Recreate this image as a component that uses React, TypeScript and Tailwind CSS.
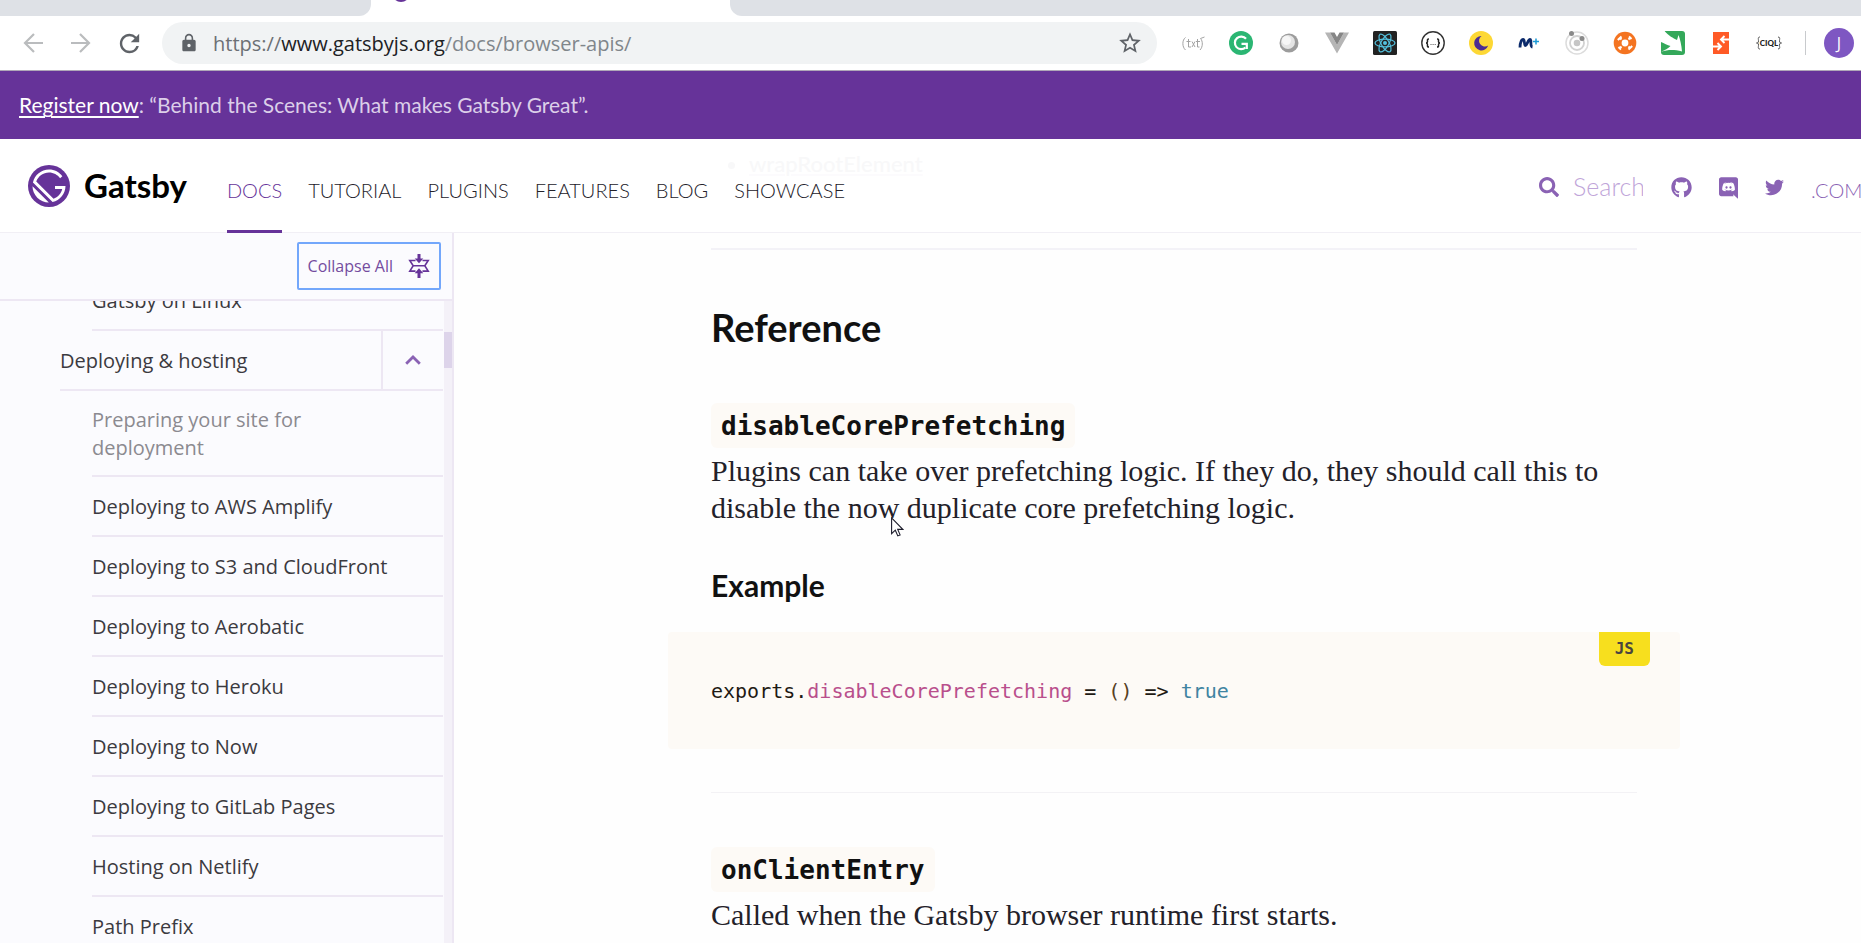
import type { ReactNode } from "react";
import { FaGithub, FaSearch, FaTwitter } from "react-icons/fa";
import { MdLock, MdRefresh, MdStarOutline } from "react-icons/md";

const navItems = ["Tutorial", "Plugins", "Features", "Blog", "Showcase"];

const guides = [
  "Deploying to AWS Amplify",
  "Deploying to S3 and CloudFront",
  "Deploying to Aerobatic",
  "Deploying to Heroku",
  "Deploying to Now",
  "Deploying to GitLab Pages",
  "Hosting on Netlify",
  "Path Prefix",
];

function Arrow({ back = false }: { back?: boolean }) {
  return (
    <svg viewBox="0 0 20 20" className="size-5" fill="none" stroke="#babcbe" strokeWidth="2.2">
      <path d={back ? "M20 10H2M11 1L2 10l9 9" : "M0 10h18M9 1l9 9-9 9"} />
    </svg>
  );
}

function GatsbyLogo() {
  return (
    <svg viewBox="0 0 28 28" className="size-[42px]">
      <circle cx="14" cy="14" r="14" fill="#663399" />
      <path
        fill="#fff"
        d="M6.2 21.8C4.1 19.7 3 16.9 3 14.2L13.9 25c-2.8-.1-5.6-1.1-7.7-3.2zm10.2 2.9L3.3 11.6C4.4 6.7 8.8 3 14 3c3.7 0 6.9 1.8 8.9 4.5l-1.5 1.3C19.7 6.5 17 5 14 5c-3.9 0-7.2 2.5-8.5 6L17 22.5c2.9-1 5.1-3.5 5.8-6.5H18v-2h7c0 5.2-3.7 9.6-8.6 10.7z"
      />
    </svg>
  );
}

function DiscordLogo() {
  return (
    <svg viewBox="0 0 448 512" className="h-[22px] w-[19px]" fill="currentColor">
      <path d="M297.216 243.2c0 15.616-11.52 28.416-26.112 28.416-14.336 0-26.112-12.8-26.112-28.416s11.52-28.416 26.112-28.416c14.592 0 26.112 12.8 26.112 28.416zm-119.552-28.416c-14.592 0-26.112 12.8-26.112 28.416s11.776 28.416 26.112 28.416c14.592 0 26.112-12.8 26.112-28.416.256-15.616-11.52-28.416-26.112-28.416zM448 52.736V512c-64.494-56.994-43.868-38.128-118.784-107.776l13.568 47.36H52.48C23.552 451.584 0 428.032 0 398.848V52.736C0 23.552 23.552 0 52.48 0h343.04C424.448 0 448 23.552 448 52.736zm-72.96 242.688c0-82.432-36.864-149.248-36.864-149.248-36.864-27.648-71.936-26.88-71.936-26.88l-3.584 4.096c43.52 13.312 63.744 32.512 63.744 32.512-60.811-33.329-132.244-33.335-191.232-7.424-9.472 4.352-15.104 7.424-15.104 7.424s21.248-20.224 67.328-33.536l-2.56-3.072s-35.072-.768-71.936 26.88c0 0-36.864 66.816-36.864 149.248 0 0 21.504 37.12 78.08 38.912 0 0 9.472-11.52 17.152-21.248-32.512-9.728-44.8-30.208-44.8-30.208 3.766 2.636 9.976 6.053 10.496 6.4 43.21 24.198 104.588 32.126 159.744 8.96 8.96-3.328 18.944-8.192 29.44-15.104 0 0-12.8 20.992-46.336 30.464 7.68 9.728 16.896 20.736 16.896 20.736 56.576-1.792 78.336-38.912 78.336-38.912z" />
    </svg>
  );
}

function CollapseIcon() {
  return (
    <svg viewBox="0 0 22 24" className="h-6 w-[22px]" fill="none" stroke="#663399" strokeWidth="1.6">
      <path d="M7.5 6.5H1.8l3.4 5.2-3.4 5.4h5.7M14.5 6.5h5.7l-3.4 5.2 3.4 5.4h-5.7M5.2 11.7h11.6" />
      <path
        fill="#663399"
        stroke="none"
        d="M9.5 0h3v4.5h2.8L11 9.3 6.7 4.5h2.8zM9.5 24h3v-4.8h2.8L11 14.3l-4.3 4.9h2.8z"
      />
    </svg>
  );
}

function Extension({ label, children }: { label: string; children: ReactNode }) {
  return (
    <button aria-label={label} className="flex size-6 items-center justify-center">
      <svg viewBox="0 0 24 24" className="size-6" fill="none">
        {children}
      </svg>
    </button>
  );
}

function Extensions() {
  return (
    <div className="flex items-center gap-6">
      <Extension label="Text helper">
        <g stroke="#a3a3a3" strokeWidth="1">
          <path d="M4.5 6.5C1 9 1 16 4.5 19M19 19c3-3 3-9 .5-11.5L23.5 6" />
          <path d="M7.5 8v8H10M5.5 10.5h4M11 10.5l3 5.5m0-5.5L11 16M16.5 8v8h2M15 10.5h4" />
        </g>
      </Extension>
      <Extension label="Grammarly">
        <circle cx="12" cy="12" r="12" fill="#2bb673" />
        <path d="M17 7.8A6.3 6.3 0 1 0 16.5 16.5" stroke="#fff" strokeWidth="2.2" />
        <path d="M12.5 12.8h5.3V18" stroke="#fff" strokeWidth="2.2" />
      </Extension>
      <Extension label="Sphere">
        <circle cx="12" cy="12" r="9.5" fill="#9c9c9c" />
        <circle cx="11" cy="11" r="7" fill="#e4e4e4" />
        <circle cx="9.5" cy="9.5" r="4.5" fill="#f6f6f6" />
      </Extension>
      <Extension label="Vue devtools">
        <path d="M0 1.5h5L12 14l7-12.500h5L12 22.5z" fill="#b5b5b5" />
        <path d="M5 1.5h4.5L12 6l2.5-4.5H19L12 14z" fill="#868686" />
      </Extension>
      <Extension label="React devtools">
        <rect width="24" height="24" rx="1.5" fill="#222" />
        <g stroke="#53c1de" strokeWidth="1.2">
          <ellipse cx="12" cy="12" rx="10" ry="3.9" />
          <ellipse cx="12" cy="12" rx="10" ry="3.9" transform="rotate(60 12 12)" />
          <ellipse cx="12" cy="12" rx="10" ry="3.9" transform="rotate(120 12 12)" />
        </g>
        <circle cx="12" cy="12" r="2" fill="#53c1de" />
      </Extension>
      <Extension label="JSON viewer">
        <circle cx="12" cy="12" r="11.2" fill="#fff" stroke="#333" strokeWidth="1.4" />
        <path
          d="M8 8c-2 0-1.5 1-1.5 2.5S6 12 5 12c1 0 1.5.5 1.5 1.7S6 16 8 16M16 8c2 0 1.5 1 1.5 2.5S18 12 19 12c-1 0-1.5.5-1.5 1.7S18 16 16 16"
          stroke="#222"
          strokeWidth="1.5"
        />
        <path d="M9.5 13.5h1M11.6 13.5h1M13.7 13.5h1" stroke="#555" strokeWidth="1" />
      </Extension>
      <Extension label="Night mode">
        <circle cx="12" cy="12" r="12" fill="#fdd835" />
        <path d="M12.500 5a7.2 7.2 0 1 0 6.7 9.5A5.6 5.6 0 0 1 12.500 5z" fill="#4b2c92" />
      </Extension>
      <Extension label="Movistar">
        <path
          d="M3 16.5C3 11 5 7.5 6.5 8.5s.5 6 2 6 2.5-6 4.500-6-.5 7 2.500 7.500"
          stroke="#0b2a6b"
          strokeWidth="2.8"
        />
        <path d="M19 7.5v6M16 10.5h6" stroke="#1b9ad6" strokeWidth="1.5" />
      </Extension>
      <Extension label="Orbit">
        <circle cx="12" cy="12" r="11" stroke="#dcdcdc" strokeWidth="1.5" />
        <circle cx="12" cy="12" r="7" stroke="#d2d2d2" strokeWidth="1.8" />
        <circle cx="12" cy="12" r="3.3" fill="#c6c6c6" />
        <circle cx="6.5" cy="2.5" r="2.5" fill="#8a8a8a" />
        <circle cx="17" cy="7.5" r="2.5" fill="#8a8a8a" />
      </Extension>
      <Extension label="Joystick">
        <circle cx="12" cy="12" r="11.3" fill="#f47421" />
        <circle cx="12" cy="12" r="3.4" fill="#fff" />
        <path
          d="M8.500 8.500L6.500 6.500M15.500 8.500L17.500 6.500M8.500 15.500L6.500 17.500M15.500 15.500l2 2M4.800 9l3.700-3.500M15.500 18.500l3.700-3.500M16 5.500l2.500 2.500M5.500 16l2.500 2.500"
          stroke="#fff"
          strokeWidth="2"
        />
      </Extension>
      <Extension label="Swift bird">
        <path d="M4 0h17a3 3 0 0 1 3 3v18a3 3 0 0 1-3 3H3a3 3 0 0 1-3-3V4z" fill="#34a85a" />
        <path
          d="M3.500 0C8 5 12 7 16 9l1.500-5C19 8 20.500 14 21 20.500 13 18.500 7 18.500 0 21c4-2 7-3.500 9.500-6C6.500 14 3 12.500 0 11V0z"
          fill="#fff"
        />
      </Extension>
      <Extension label="Redirector">
        <path d="M4 1h16v22H4z" fill="#ff5a26" />
        <path
          d="M20 8.5h-7M15.500 5L12 8.500l3.500 3.500M4 15.500h7M8.500 12l3.500 3.500L8.500 19"
          stroke="#fff"
          strokeWidth="1.9"
        />
      </Extension>
      <button
        aria-label="CIQL"
        className="flex size-6 items-center justify-center font-['Lato',sans-serif] text-[8px] font-black text-[#222]"
      >
        <svg viewBox="0 0 4 14" className="h-[14px] w-1 shrink-0" fill="none" stroke="#555">
          <path d="M4 1C1.500 1 2.500 3 2.500 5S1.500 7 .5 7c1 0 2 0 2 2s-1 4 1.500 4" />
        </svg>
        CIQL
        <svg viewBox="0 0 4 14" className="h-[14px] w-1 shrink-0" fill="none" stroke="#555">
          <path d="M0 1c2.500 0 1.500 2 1.500 4s1 2 2 2c-1 0-2 0-2 2s1 4-1.500 4" />
        </svg>
      </button>
    </div>
  );
}

function BrowserChrome() {
  return (
    <div className="shrink-0">
      <div className="flex h-4 bg-white">
        <div className="w-[371px] rounded-br-xl bg-[#dee1e6]" />
        <div className="flex w-[359px] overflow-hidden pl-[21px]">
          <svg viewBox="0 0 18 4" className="h-1 w-[18px]">
            <circle cx="9" cy="-7" r="9" fill="#663399" />
          </svg>
        </div>
        <div className="flex-1 rounded-bl-xl bg-[#dee1e6]" />
      </div>
      <div className="flex h-[55px] items-center border-b border-[#b0a8b8] bg-white pr-[7px] pl-[23px]">
        <div className="flex items-center gap-7">
          <button aria-label="Back">
            <Arrow back />
          </button>
          <button aria-label="Forward">
            <Arrow />
          </button>
        </div>
        <button aria-label="Reload" className="ml-6">
          <MdRefresh className="size-[29px] text-[#5f6368]" />
        </button>
        <div className="ml-[18px] flex h-[42px] flex-1 items-center rounded-full bg-[#f1f3f4] pr-[14px] pl-[17px]">
          <MdLock className="size-5 text-[#5f6368]" />
          <p className="ml-[14px] flex-1 pt-px font-['Open_Sans',sans-serif] text-xl text-[#80868b]">
            <span className="text-[#6c7075]">https://</span>
            <span className="text-[#202124]">www.gatsbyjs.org</span>
            /docs/browser-apis/
          </p>
          <button aria-label="Bookmark this page">
            <MdStarOutline className="size-[26px] text-[#5f6368]" />
          </button>
        </div>
        <div className="ml-6">
          <Extensions />
        </div>
        <div className="ml-6 h-6 w-px bg-[#c8cacd]" />
        <button className="ml-[18px] flex size-[30px] items-center justify-center rounded-full bg-[#7e57c2] font-['Open_Sans',sans-serif] text-base text-white">
          J
        </button>
      </div>
    </div>
  );
}

function Header() {
  return (
    <header className="relative flex h-[94px] shrink-0 items-stretch border-b border-[#f1eff5] bg-white pl-7 font-['Lato',sans-serif] whitespace-nowrap">
      <ul className="absolute top-2 left-[749px] list-disc text-[22px] font-medium text-[#f8f8f9] underline decoration-[#fcfbfd]">
        <li>wrapRootElement</li>
      </ul>
      <a href="#home" className="relative flex items-center gap-[14px] text-[33px] font-bold text-black">
        <GatsbyLogo />
        Gatsby
      </a>
      <nav className="relative ml-10 flex gap-[26px] text-xl font-light text-[#232129] uppercase">
        <a href="#docs" className="-mb-px flex items-center border-b-[3px] border-[#663399] pt-[10px] text-[#663399]">
          Docs
        </a>
        {navItems.map((item) => (
          <a key={item} href={`#${item.toLowerCase()}`} className="flex items-center pt-2">
            {item}
          </a>
        ))}
      </nav>
      <div className="ml-auto flex items-center text-[#8a62b4]">
        <label className="flex items-center gap-[14px] pt-[3px]">
          <FaSearch className="size-5" />
          <input
            aria-label="Search"
            placeholder="Search"
            className="w-[70px] bg-transparent text-[25px] font-light outline-none placeholder:text-[#bfa5d9]"
          />
        </label>
        <div className="ml-7 flex items-center gap-[27px] pt-1">
          <a href="#github" aria-label="GitHub">
            <FaGithub className="size-[21px]" />
          </a>
          <a href="#discord" aria-label="Discord">
            <DiscordLogo />
          </a>
          <a href="#twitter" aria-label="Twitter">
            <FaTwitter className="size-[19px]" />
          </a>
          <a href="#com" className="w-[50px] overflow-hidden pt-1 text-xl font-light">
            .COM
          </a>
        </div>
      </div>
    </header>
  );
}

function Guide({ children, done = false }: { children: ReactNode; done?: boolean }) {
  return (
    <li className="ml-[92px] flex min-h-[60px] items-center border-b-2 border-[#ede7f3] pt-[15px] pb-[13px]">
      <a href="#guide" className={done ? "max-w-60 text-[#8b8a90]" : "text-[#3b3a40]"}>
        {children}
      </a>
    </li>
  );
}

function Sidebar() {
  return (
    <aside className="flex w-[454px] shrink-0 flex-col border-r-2 border-[#ede7f3] bg-[#fbfbfe] font-['Open_Sans',sans-serif]">
      <div className="flex shrink-0 justify-end border-b-2 border-[#ede7f3] py-[9px] pr-[11px]">
        <button className="flex h-12 items-center gap-[15px] rounded-xs border-2 border-[#73a7fb] pr-[9px] pl-[9px] text-base text-[#744c9e]">
          Collapse All
          <CollapseIcon />
        </button>
      </div>
      <div className="flex min-h-0 flex-1">
        <div className="min-w-0 flex-1 overflow-hidden">
          <ul className="-mt-[30px] text-xl leading-7">
            <Guide>Gatsby on Linux</Guide>
            <li className="ml-[60px] flex h-[60px] border-b-2 border-[#ede7f3] text-[#3b3a40]">
              <a href="#deploying" className="flex flex-1 items-center pt-0.5">
                Deploying &amp; hosting
              </a>
              <button
                aria-label="Collapse Deploying & hosting"
                className="flex w-[62px] items-center justify-center border-l-2 border-[#ede7f3]"
              >
                <svg viewBox="0 0 16 10" className="h-[10px] w-4" fill="none" stroke="#8a62b4" strokeWidth="2.8">
                  <path d="M1.2 8.8L8 2l6.8 6.8" />
                </svg>
              </button>
            </li>
            <Guide done>Preparing your site for deployment</Guide>
            {guides.map((guide) => (
              <Guide key={guide}>{guide}</Guide>
            ))}
          </ul>
        </div>
        <div className="ml-px w-2 bg-[#f4f1f8] pt-[31px]">
          <div className="h-9 bg-[#ddd4ea]" />
        </div>
      </div>
    </aside>
  );
}

function ApiName({ children }: { children: string }) {
  return (
    <h3 className="flex">
      <code className="rounded-md bg-[#fdfaf6] px-[10px] pt-px font-['DejaVu_Sans_Mono',monospace] text-[26px] leading-[44px] font-bold text-[#111]">
        {children}
      </code>
    </h3>
  );
}

function Paragraph({ children }: { children: ReactNode }) {
  return (
    <p className="mt-1 font-['Liberation_Serif',serif] text-[30px] leading-[37px] text-[#232129]">{children}</p>
  );
}

function Article() {
  return (
    <main className="relative min-w-0 flex-1 overflow-hidden bg-[#fefefe] pt-[15px] pr-[224px] pl-[257px]">
      <hr className="border-t-2 border-[#f3f2f7]" />
      <h2 className="mt-[55px] font-['Lato',sans-serif] text-[38px] leading-[44px] font-bold text-[#111]">
        Reference
      </h2>
      <div className="mt-[54px]">
        <ApiName>disableCorePrefetching</ApiName>
        <Paragraph>
          Plugins can take over prefetching logic. If they do, they should call this to disable the now duplicate core
          prefetching logic.
        </Paragraph>
      </div>
      <h4 className="mt-[41px] font-['Lato',sans-serif] text-[30px] leading-9 font-bold text-[#111]">Example</h4>
      <div className="relative mt-[29px] -mr-[43px] -ml-[43px] rounded-sm bg-[#fdfaf6] px-[43px] pt-[44px] pb-[43px]">
        <span className="absolute top-0 right-[30px] rounded-b-md bg-[#f7df1e] px-4 font-['DejaVu_Sans_Mono',monospace] text-base leading-[34px] font-bold text-[#4a4540]">
          JS
        </span>
        <pre className="font-['DejaVu_Sans_Mono',monospace] text-xl leading-[30px] text-[#1f1a14]">
          exports.<span className="text-[#b94f8c]">disableCorePrefetching</span> = <span className="text-[#57401f]">()</span>
          {" => "}
          <span className="text-[#4084a1]">true</span>
        </pre>
      </div>
      <hr className="mt-[43px] border-[#f3f2f5]" />
      <div className="mt-[54px]">
        <ApiName>onClientEntry</ApiName>
        <Paragraph>Called when the Gatsby browser runtime first starts.</Paragraph>
      </div>
      <svg viewBox="0 0 13 20" className="absolute top-[284px] left-[437px] h-5 w-[13px]">
        <path
          d="M.6.9v15.8l3.7-3.5 2.5 5.7 2.3-1-2.4-5.5h5.1z"
          fill="#fff"
          stroke="#1c1c2b"
          strokeWidth="1.1"
        />
      </svg>
    </main>
  );
}

export default function App() {
  return (
    <div className="flex h-screen flex-col overflow-hidden bg-white">
      <BrowserChrome />
      <p className="flex h-[68px] shrink-0 items-center bg-[#663399] px-[19px] font-['Lato',sans-serif] text-[21px] text-[#dccfe9]">
        <span>
          <a href="#register" className="text-white underline decoration-2 underline-offset-3">
            Register now
          </a>
          : “Behind the Scenes: What makes Gatsby Great”.
        </span>
      </p>
      <Header />
      <div className="flex min-h-0 flex-1">
        <Sidebar />
        <Article />
      </div>
    </div>
  );
}
